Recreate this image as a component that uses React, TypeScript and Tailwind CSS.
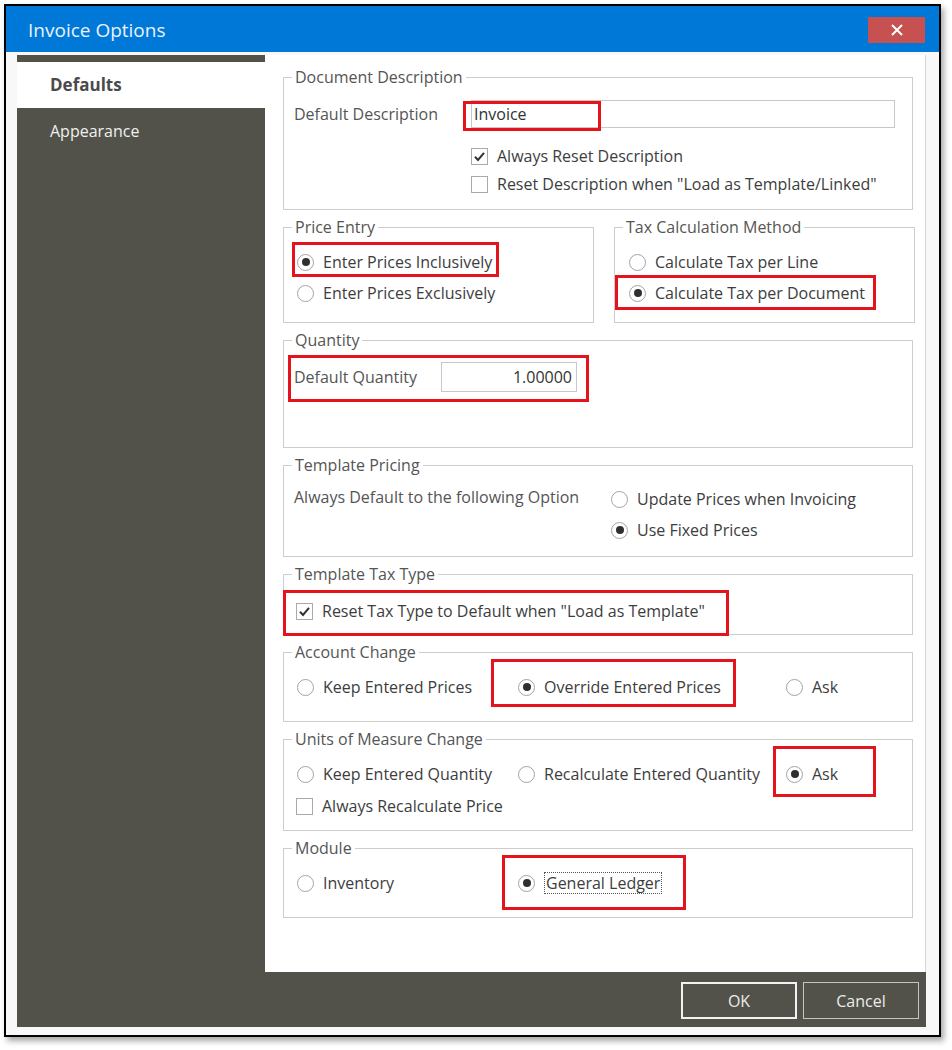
import React from 'react';

type Children = { children?: React.ReactNode };

function GroupBox({ title, className, children }: { title: string; className?: string } & Children) {
  return (
    <div className={`relative border border-[#cdcdcd] ${className ?? ''}`}>
      <span className="absolute -top-[11px] left-[8px] bg-white px-[3px] text-[16px] leading-[20px] text-[#555]">
        {title}
      </span>
      {children}
    </div>
  );
}

// red annotation frame lying over the dialog
function Mark({ className }: { className: string }) {
  return <span className={`pointer-events-none absolute border-[3px] border-[#e5141c] ${className}`} />;
}

function Radio({ label, checked, focus }: { label: string; checked?: boolean; focus?: boolean }) {
  return (
    <div className="flex h-[24px] items-center gap-[9px]">
      <span className="flex h-[17px] w-[17px] shrink-0 items-center justify-center rounded-full border border-[#a3a3a3] bg-white">
        {checked && <span className="h-[8px] w-[8px] rounded-full bg-[#2f2f2f]" />}
      </span>
      <span
        className={`whitespace-nowrap text-[16px] leading-[20px] text-[#3d3d3d] ${
          focus ? 'border border-dotted border-[#555] px-[1px]' : ''
        }`}
      >
        {label}
      </span>
    </div>
  );
}

function Check({ label, checked }: { label: string; checked?: boolean }) {
  return (
    <div className="flex h-[24px] items-center gap-[9px]">
      <span className="flex h-[17px] w-[17px] shrink-0 items-center justify-center border border-[#aaaaaa] bg-white">
        {checked && (
          <svg width="13" height="13" viewBox="0 0 13 13">
            <path d="M2 6.8 L5 10 L11 2.8" fill="none" stroke="#333" strokeWidth="2" />
          </svg>
        )}
      </span>
      <span className="whitespace-nowrap text-[16px] leading-[20px] text-[#3d3d3d]">{label}</span>
    </div>
  );
}

export default function App() {
  return (
    <div className="h-[1050px] w-[952px] bg-white pl-[4px] pt-[4px] font-['Open_Sans',sans-serif]">
      <div className="h-[1033px] w-[937px] border-2 border-black shadow-[3px_4px_6px_rgba(0,0,0,0.35)]">
        {/* title bar */}
        <div className="flex h-[46px] items-start justify-between bg-[#0078d7] pl-[22px] pr-[14px]">
          <span className="mt-[11px] text-[19px] leading-[26px] text-[#eaf2fb]">Invoice Options</span>
          <button className="mt-[11px] flex h-[26px] w-[57px] items-center justify-center bg-[#c75050]">
            <svg width="12" height="12" viewBox="0 0 12 12">
              <path d="M1 1 L11 11 M11 1 L1 11" stroke="#fff" strokeWidth="2" />
            </svg>
          </button>
        </div>

        {/* body */}
        <div className="bg-[#f8f8f8] pb-[8px] pl-[11px] pr-[13px] pt-[3px]">
          <div className="flex h-[917px]">
            {/* sidebar */}
            <div className="w-[248px] bg-[#52524a] pt-[7px]">
              <div className="flex h-[46px] items-center bg-white pl-[33px] text-[17px] font-bold text-[#4a4a4a]">
                Defaults
              </div>
              <div className="flex h-[46px] items-center pl-[33px] text-[16px] text-[#efefef]">Appearance</div>
            </div>

            {/* content */}
            <div className="flex flex-1 flex-col gap-[17px] border-r border-[#d6d6d6] bg-white pl-[18px] pr-[12px] pt-[22px]">
              <GroupBox title="Document Description" className="h-[133px]">
                <div className="flex items-center pl-[10px] pt-[22px]">
                  <span className="w-[177px] text-[16px] text-[#555]">Default Description</span>
                  <div className="flex h-[28px] w-[424px] items-center border border-[#c8c8c8] pl-[2px] text-[16px] text-[#333]">
                    Invoice
                  </div>
                </div>
                <div className="mt-[16px] flex flex-col gap-[4px] pl-[187px]">
                  <Check label="Always Reset Description" checked />
                  <Check label={'Reset Description when "Load as Template/Linked"'} />
                </div>
                <Mark className="left-[179px] top-[23px] h-[30px] w-[138px]" />
              </GroupBox>

              <div className="flex h-[96px] gap-[20px]">
                <GroupBox title="Price Entry" className="w-[311px]">
                  <div className="flex flex-col gap-[7px] pl-[13px] pt-[22px]">
                    <Radio label="Enter Prices Inclusively" checked />
                    <Radio label="Enter Prices Exclusively" />
                  </div>
                  <Mark className="left-[8px] top-[14px] h-[35px] w-[207px]" />
                </GroupBox>
                <GroupBox title="Tax Calculation Method" className="-mr-[2px] flex-1">
                  <div className="flex flex-col gap-[7px] pl-[14px] pt-[22px]">
                    <Radio label="Calculate Tax per Line" />
                    <Radio label="Calculate Tax per Document" checked />
                  </div>
                  <Mark className="left-0 top-[47px] h-[35px] w-[261px]" />
                </GroupBox>
              </div>

              <GroupBox title="Quantity" className="h-[108px]">
                <div className="flex items-center pl-[10px] pt-[21px]">
                  <span className="w-[147px] text-[16px] text-[#555]">Default Quantity</span>
                  <div className="flex h-[30px] w-[136px] items-center justify-end border border-[#c8c8c8] pr-[4px] text-[16px] text-[#333]">
                    1.00000
                  </div>
                </div>
                <Mark className="left-[4px] top-[14px] h-[47px] w-[301px]" />
              </GroupBox>

              <GroupBox title="Template Pricing" className="h-[92px]">
                <div className="flex pt-[21px]">
                  <span className="w-[327px] pl-[10px] text-[16px] leading-[20px] text-[#555]">
                    Always Default to the following Option
                  </span>
                  <div className="flex flex-col gap-[7px]">
                    <Radio label="Update Prices when Invoicing" />
                    <Radio label="Use Fixed Prices" checked />
                  </div>
                </div>
              </GroupBox>

              <GroupBox title="Template Tax Type" className="h-[61px]">
                <div className="pl-[12px] pt-[24px]">
                  <Check label={'Reset Tax Type to Default when "Load as Template"'} checked />
                </div>
                <Mark className="-left-px top-[15px] h-[46px] w-[446px]" />
              </GroupBox>

              <GroupBox title="Account Change" className="h-[70px]">
                <div className="flex pl-[13px] pt-[22px]">
                  <div className="w-[221px]">
                    <Radio label="Keep Entered Prices" />
                  </div>
                  <div className="w-[268px]">
                    <Radio label="Override Entered Prices" checked />
                  </div>
                  <Radio label="Ask" />
                </div>
                <Mark className="left-[207px] top-[6px] h-[48px] w-[245px]" />
              </GroupBox>

              <GroupBox title="Units of Measure Change" className="h-[92px]">
                <div className="flex pl-[13px] pt-[22px]">
                  <div className="w-[221px]">
                    <Radio label="Keep Entered Quantity" />
                  </div>
                  <div className="w-[268px]">
                    <Radio label="Recalculate Entered Quantity" />
                  </div>
                  <Radio label="Ask" checked />
                </div>
                <div className="mt-[8px] pl-[12px]">
                  <Check label="Always Recalculate Price" />
                </div>
                <Mark className="left-[489px] top-[6px] h-[51px] w-[103px]" />
              </GroupBox>

              <GroupBox title="Module" className="h-[70px]">
                <div className="flex pl-[13px] pt-[22px]">
                  <div className="w-[221px]">
                    <Radio label="Inventory" />
                  </div>
                  <Radio label="General Ledger" checked focus />
                </div>
                <Mark className="left-[218px] top-[6px] h-[55px] w-[184px]" />
              </GroupBox>
            </div>
          </div>

          {/* button bar */}
          <div className="flex h-[55px] items-start justify-end gap-[6px] bg-[#52524a] pr-[7px] pt-[10px]">
            <button className="h-[37px] w-[116px] border-2 border-[#f2f2f2] text-[16px] text-[#ececec]">OK</button>
            <button className="h-[37px] w-[116px] border border-[#c4c4c4] text-[16px] text-[#ececec]">Cancel</button>
          </div>
        </div>
      </div>
    </div>
  );
}
